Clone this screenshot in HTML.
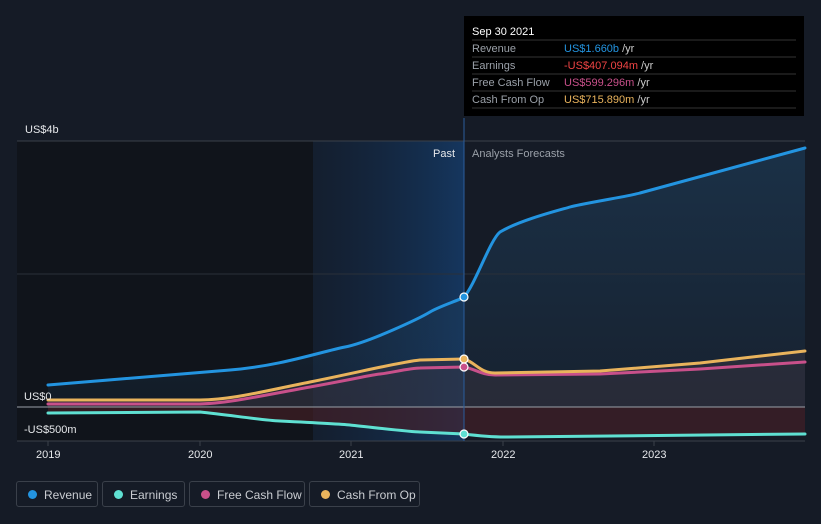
<!DOCTYPE html>
<html><head><style>
body{margin:0;background:#151b26;width:821px;height:524px;overflow:hidden;font-family:"Liberation Sans",sans-serif;}
.leg{position:absolute;top:481px;height:26px;border:1px solid #3a404a;border-radius:3px;color:#c9ccd1;font-size:12px;line-height:26px;box-sizing:border-box;}
.leg i{position:absolute;left:11px;top:8px;width:9px;height:9px;border-radius:50%;}
.leg span{position:absolute;left:27px;}
</style></head><body>
<svg width="821" height="524" style="position:absolute;left:0;top:0">
<defs>
<linearGradient id="pb" x1="0" x2="1" y1="0" y2="0"><stop offset="0" stop-color="#12243c" stop-opacity="0.4"/><stop offset="1" stop-color="#15365e"/></linearGradient>
<linearGradient id="rv" x1="0" x2="0" y1="0" y2="1"><stop offset="0" stop-color="#1d3a55" stop-opacity="0.7"/><stop offset="1" stop-color="#1d3a55" stop-opacity="0.2"/></linearGradient>
</defs>
<rect x="17" y="141" width="296" height="300" fill="#10141b"/>
<rect x="313" y="141" width="151" height="300" fill="url(#pb)"/>
<path d="M48,385 C120,379 180,374 230,370 S320,352 345,347 S420,318 430,312 S460,300 464,297 C475,285 490,240 500,232 C520,220 560,210 570,207 S630,196 640,193 L805,148 L805,407 L48,407Z" fill="url(#rv)"/>
<path d="M48,400 L200,400 C230,400 260,392 310,382 S400,362 420,360 L464,359 C475,362 480,373 495,373 L600,371 L700,363 L805,351 L805,407 L48,407Z" fill="#3a3340" opacity="0.5"/>
<path d="M48,413 L200,412 C230,415 260,420 280,421 S340,424 350,425 S410,432 420,432 L464,434 C480,436 490,437 505,437 L805,434 L805,407 L48,407Z" fill="#4a1f26" opacity="0.6"/>
<line x1="17" y1="141" x2="805" y2="141" stroke="#3a404a"/>
<line x1="17" y1="274" x2="805" y2="274" stroke="#2a3039"/>
<line x1="17" y1="407" x2="805" y2="407" stroke="#9aa0a8"/>
<line x1="17" y1="441" x2="805" y2="441" stroke="#3a404a"/>
<line x1="464" y1="118" x2="464" y2="441" stroke="#2a5d9c"/>
<g stroke="#3a404a"><line x1="48" y1="441" x2="48" y2="446"/><line x1="200" y1="441" x2="200" y2="446"/><line x1="351" y1="441" x2="351" y2="446"/><line x1="503" y1="441" x2="503" y2="446"/><line x1="654" y1="441" x2="654" y2="446"/></g>
<g fill="none" stroke-width="3" stroke-linecap="round">
<path d="M48,413 L200,412 C230,415 260,420 280,421 S340,424 350,425 S410,432 420,432 L464,434 C480,436 490,437 505,437 L805,434" stroke="#5fe0d2"/>
<path d="M48,404 L200,404 C230,403 260,396 310,387 S370,375 380,374 S410,368 420,368 L464,367 C475,369 482,375 495,375 L600,374 L700,369 L805,362" stroke="#c8508a"/>
<path d="M48,400 L200,400 C230,400 260,392 310,382 S400,362 420,360 L464,359 C475,362 480,373 495,373 L600,371 L700,363 L805,351" stroke="#e9b35c"/>
<path d="M48,385 C120,379 180,374 230,370 S320,352 345,347 S420,318 430,312 S460,300 464,297 C475,285 490,240 500,232 C520,220 560,210 570,207 S630,196 640,193 L805,148" stroke="#2394e0"/>
</g>
<circle cx="464" cy="297" r="4" fill="#2394e0" stroke="#fff" stroke-width="1.2"/>
<circle cx="464" cy="359" r="4" fill="#e9b35c" stroke="#fff" stroke-width="1.2"/>
<circle cx="464" cy="367" r="4" fill="#c8508a" stroke="#fff" stroke-width="1.2"/>
<circle cx="464" cy="434" r="4" fill="#5fe0d2" stroke="#fff" stroke-width="1.2"/>
<g font-size="11" fill="#e6e8eb">
<text x="25" y="133">US$4b</text><text x="24" y="400">US$0</text><text x="24" y="433">-US$500m</text>
<text x="36" y="458">2019</text><text x="188" y="458">2020</text><text x="339" y="458">2021</text><text x="491" y="458">2022</text><text x="642" y="458">2023</text>
<text x="433" y="157">Past</text><text x="472" y="157" fill="#9aa0a8">Analysts Forecasts</text>
</g>
<rect x="464" y="16" width="340" height="100" fill="#000"/>
<g font-size="11">
<text x="472" y="35" fill="#fff">Sep 30 2021</text>
<g stroke="#333"><line x1="472" y1="40" x2="796" y2="40"/><line x1="472" y1="57" x2="796" y2="57"/><line x1="472" y1="74" x2="796" y2="74"/><line x1="472" y1="91" x2="796" y2="91"/><line x1="472" y1="108" x2="796" y2="108"/></g>
<text x="472" y="52" fill="#9aa0a8">Revenue</text><text x="564" y="52" fill="#2394e0">US$1.660b <tspan fill="#ccc">/yr</tspan></text>
<text x="472" y="69" fill="#9aa0a8">Earnings</text><text x="564" y="69" fill="#ef4444">-US$407.094m <tspan fill="#ccc">/yr</tspan></text>
<text x="472" y="86" fill="#9aa0a8">Free Cash Flow</text><text x="564" y="86" fill="#c8508a">US$599.296m <tspan fill="#ccc">/yr</tspan></text>
<text x="472" y="103" fill="#9aa0a8">Cash From Op</text><text x="564" y="103" fill="#e9b35c">US$715.890m <tspan fill="#ccc">/yr</tspan></text>
</g>
</svg>
<div class="leg" style="left:16px;width:82px"><i style="background:#2394e0"></i><span>Revenue</span></div>
<div class="leg" style="left:102px;width:83px"><i style="background:#5fe0d2"></i><span>Earnings</span></div>
<div class="leg" style="left:189px;width:116px"><i style="background:#c8508a"></i><span>Free Cash Flow</span></div>
<div class="leg" style="left:309px;width:111px"><i style="background:#e9b35c"></i><span>Cash From Op</span></div>
</body></html>
